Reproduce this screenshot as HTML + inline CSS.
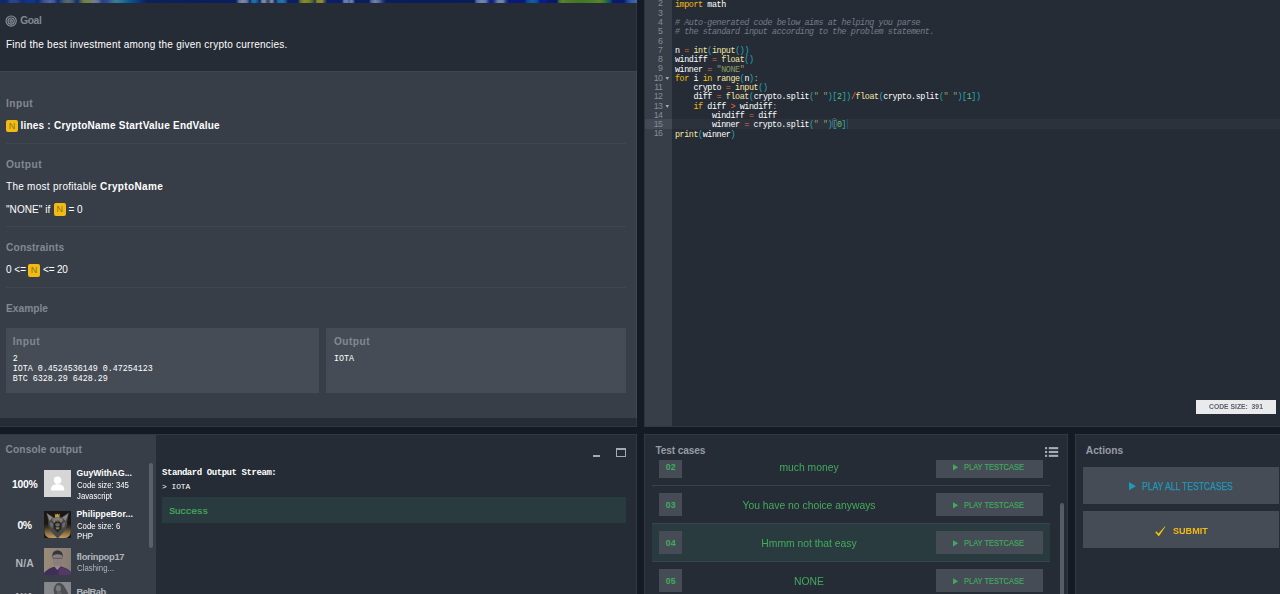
<!DOCTYPE html>
<html><head><meta charset="utf-8">
<style>
*{margin:0;padding:0;box-sizing:border-box}
html,body{width:1280px;height:594px;overflow:hidden;background:#151b24}
body{font-family:"Liberation Sans",sans-serif;font-size:10px;color:#fff;position:relative}
.abs{position:absolute}
.t{position:absolute;white-space:nowrap;line-height:12px}
.h{color:#838891;font-weight:bold;font-size:10.2px}
.b{font-weight:bold}
.n{background:#f2bb13;color:#8a7320;border-radius:2px;padding:1.4px 2.8px;font-size:9px;font-weight:normal;position:relative;top:0.2px}
.mono{font-family:"Liberation Mono",monospace}
#left{left:0;top:0;width:637.2px;height:427.3px;background:#383e48;overflow:hidden}
#strip{left:0;top:0;width:637px;height:3.2px;background:linear-gradient(90deg,#0b2874 0px,#0c2a78 7px,#2e418e 10px,#29418b 17px,#0d2c79 22px,#0d358e 27px,#0e3790 33px,#0c2876 38px,#3a5195 44px,#50659f 50px,#3f5697 54px,#0c2a79 58px,#485c6b 64px,#576b6c 68px,#495c6c 72px,#0c2876 77px,#687841 83px,#758440 86px,#737f52 90px,#737c9a 94px,#667097 98px,#253f86 102px,#324c93 108px,#337393 113px,#387d95 117px,#266f97 122px,#0e5c98 128px,#0e4486 135px,#0c2f73 141px,#0c2058 147px,#0b1e5c 214px,#0a1e62 236px,#66739a 239px,#7f89a7 243px,#66739a 247px,#0c286c 250px,#1b6ba7 252px,#1b72ae 255px,#13478e 258px,#0c2364 260px,#78829f 262px,#808aa4 265px,#3f4a6c 267px,#3f4a6c 269px,#808aa4 271px,#6b7597 273px,#0a205f 275px,#2068a1 278px,#2675a7 282px,#1c619a 285px,#0a1e64 288px,#0a1e64 298px,#596a2a 300px,#858f27 304px,#73842a 309px,#4c5c31 313px,#253045 315px,#858431 317px,#928f2a 322px,#3f4745 325px,#0a1e6c 327px,#0a1e6c 342px,#6675a7 344px,#7381ae 347px,#4c5b97 349px,#7381ae 351px,#5968a1 353px,#0a1d5c 355px,#0a1d5c 369px,#4c5c93 371px,#7382ae 375px,#596a9d 379px,#253473 383px,#0c1d5c 386px,#0b1b5a 474px,#596fa1 477px,#7386ae 482px,#5e75a7 486px,#172a8d 489px,#0a1b86 492px,#324490 495px,#7382a7 498px,#7382a7 503px,#25358d 506px,#0a1879 509px,#0a1879 524px,#0e4e9a 528px,#0f61a1 533px,#0e4a9d 537px,#0a1b8e 540px,#0a1b8a 546px,#0a166c 549px,#0a166c 557px,#3f6a31 559px,#59822a 562px,#4e7c24 568px,#407727 580px,#4c7d27 592px,#59842a 600px,#3f7733 604px,#176a4b 607px,#134e67 610px,#0a1873 613px,#0a1873 624px,#1b4197 627px,#325ba7 631px,#3f65ae 636px,#3f65ae 637px)}
#goal{left:0;top:3px;width:637.2px;height:68px;background:#262c36}
.sep{position:absolute;left:6px;width:620px;height:1px;background:#3f4650}
.box{position:absolute;background:#464c56}
#lbot{left:0;top:417.8px;width:637.2px;height:9.5px;background:#262c36}
#editor{left:644px;top:0;width:636px;height:427.3px;background:#262c36;border-bottom:1px solid #323842;overflow:hidden}
#gutter{left:0;top:0;width:28px;height:428px;background:#383e48}

.ln{position:absolute;left:0;width:18.55px;text-align:right;color:#848c97;font-size:8.8px;letter-spacing:-0.45px;line-height:9.2857px;height:9.2857px;margin-top:0.9px}
.cl{position:absolute;left:30.9px;white-space:pre;font-family:"Liberation Mono",monospace;font-size:8.4px;letter-spacing:-0.3971px;line-height:9.2857px;height:9.2857px;color:#fff;margin-top:2.0px}
.fold{position:absolute;left:21.8px;width:0;height:0;border-left:1.9px solid transparent;border-right:1.9px solid transparent;border-top:3.2px solid #a4acb8;margin-top:0.5px}
.k{color:#f2bb13}.f{color:#f6e7a2}.p{color:#1dabb8}.o{color:#f26a36}.s{color:#8a9a62}.m{color:#5cc36c}.c{color:#757d8b;font-style:italic}.col{color:#a8aeb8}
.br{outline:1px solid #6b7380;outline-offset:-0.5px}
.cur{display:inline-block;width:1px;height:8.6px;background:#8a929c;vertical-align:top;margin-top:0.3px}

#console{left:0;top:434.3px;width:637.2px;height:160px;background:#262c36;border:1px solid #323842;border-left:0;border-bottom:0;overflow:hidden}
#tests{left:644px;top:434.3px;width:424.2px;height:160px;background:#262c36;border:1px solid #323842;border-bottom:0;overflow:hidden}
#actions{left:1075px;top:434.3px;width:205px;height:160px;background:#262c36;border:1px solid #323842;border-bottom:0;border-right:0;overflow:hidden}
.av{left:44.1px;width:27.2px;height:27.2px;overflow:hidden}
.pc{font-size:10.4px}
.nm{left:76.5px;font-size:8.6px}
.sm{left:76.5px;font-size:8.6px;transform-origin:0 0;transform:scaleX(0.905)}
.tn{left:14.2px;width:22.9px;height:22.7px;background:#464c56;color:#41ab5d;font-weight:bold;font-size:8.8px}
.tname{left:14.0px;width:300px;text-align:center;color:#41ab5d;font-size:11px;line-height:14px;transform:scaleX(0.94)}
.tb{left:290.9px;width:106.9px;height:22.7px;background:#464c56;color:#41ab5d;white-space:nowrap}
.pt{font-size:9.7px;transform-origin:0 0;transform:scaleX(0.773);margin-top:0.4px;-webkit-text-stroke:0.2px #41ab5d}
</style></head><body>

<div id="left" class="abs">
  <div id="goal" class="abs"></div>
  <div id="strip" class="abs"></div>
  <svg class="abs" style="left:5px;top:15.4px" width="12" height="12" viewBox="0 0 12 12"><g fill="none" stroke="#8b9099" stroke-width="1.15"><circle cx="6.15" cy="6.05" r="5.1"/><circle cx="6.15" cy="6.05" r="3.1"/><circle cx="6.15" cy="6.05" r="1.25"/></g></svg>
  <div id="tGoal" class="t h" style="left:20.2px;top:15.1px;letter-spacing:-0.367px">Goal</div>
  <div id="tFind" class="t" style="left:6px;top:38.9px;letter-spacing:0.241px">Find the best investment among the given crypto currencies.</div>

  <div id="tIn" class="t h" style="left:6px;top:97.7px;letter-spacing:0.450px">Input</div>
  <div class="t" style="left:6px;top:119.9px"><span class="n">N</span></div>
  <div id="tLines" class="t b" style="left:20.4px;top:119.9px;letter-spacing:0.233px">lines : CryptoName StartValue EndValue</div>
  <div class="sep" style="top:143px"></div>
  <div id="tOut" class="t h" style="left:6px;top:158.5px;letter-spacing:0.440px">Output</div>
  <div id="tMost" class="t" style="left:6px;top:180.6px;letter-spacing:0.278px">The most profitable</div>
  <div id="tCN" class="t b" style="left:100.1px;top:180.6px;letter-spacing:0.356px">CryptoName</div>
  <div id="tNone" class="t" style="left:6px;top:203.5px;letter-spacing:0.075px">"NONE" if</div>
  <div class="t" style="left:53.6px;top:203.5px"><span class="n">N</span></div>
  <div id="tEq0" class="t" style="left:68.4px;top:203.5px">= 0</div>
  <div class="sep" style="top:226px"></div>
  <div id="tCons" class="t h" style="left:6px;top:242.1px;letter-spacing:0.150px">Constraints</div>
  <div id="tZero" class="t" style="left:6px;top:264.2px">0 &lt;=</div>
  <div class="t" style="left:27.9px;top:264.2px"><span class="n">N</span></div>
  <div id="t20" class="t" style="left:43px;top:264.2px;letter-spacing:-0.175px">&lt;= 20</div>
  <div class="sep" style="top:286.5px"></div>
  <div id="tEx" class="t h" style="left:6px;top:302.7px">Example</div>
  <div class="box" style="left:6px;top:328px;width:313px;height:65px"></div>
  <div class="box" style="left:326.4px;top:328px;width:299.2px;height:65px"></div>
  <div id="tIn2" class="t h" style="left:12.8px;top:335.7px;letter-spacing:0.475px">Input</div>
  <div id="tOut2" class="t h" style="left:334px;top:335.7px;letter-spacing:0.44px">Output</div>
  <div class="t mono" style="left:12.8px;top:354.3px;font-size:8.33px;line-height:10px">2<br>IOTA 0.4524536149 0.47254123<br>BTC 6328.29 6428.29</div>
  <div class="t mono" style="left:334px;top:354.3px;font-size:8.33px;line-height:10px">IOTA</div>
  <div id="lbot" class="abs"></div>
  <div class="abs" style="left:0;top:71px;width:636.2px;height:1px;background:rgba(255,255,255,0.035)"></div>
  <div class="abs" style="left:636.2px;top:3px;width:1px;height:424.3px;background:rgba(255,255,255,0.055)"></div>
  <div class="abs" style="left:0;top:426.3px;width:636.2px;height:1px;background:rgba(255,255,255,0.055)"></div>
</div>

<div id="editor" class="abs">
  <div class="abs" style="left:0;top:119.30px;width:636px;height:9.29px;background:#2c323c"></div>
  <div id="gutter" class="abs"></div>
  <div class="abs" style="left:0;top:119.30px;width:28px;height:9.29px;background:#444a54"></div>
  <div class="ln" style="top:-1.41px">2</div>
  <div class="cl" style="top:-1.41px"><span class="k">import</span> math</div>
  <div class="ln" style="top:7.87px">3</div>
  <div class="ln" style="top:17.16px">4</div>
  <div class="cl" style="top:17.16px"><span class="c"># Auto-generated code below aims at helping you parse</span></div>
  <div class="ln" style="top:26.44px">5</div>
  <div class="cl" style="top:26.44px"><span class="c"># the standard input according to the problem statement.</span></div>
  <div class="ln" style="top:35.73px">6</div>
  <div class="ln" style="top:45.01px">7</div>
  <div class="cl" style="top:45.01px">n <span class="o">=</span> <span class="f">int</span><span class="p">(</span><span class="f">input</span><span class="p">())</span></div>
  <div class="ln" style="top:54.30px">8</div>
  <div class="cl" style="top:54.30px">windiff <span class="o">=</span> <span class="f">float</span><span class="p">()</span></div>
  <div class="ln" style="top:63.59px">9</div>
  <div class="cl" style="top:63.59px">winner <span class="o">=</span> <span class="s">"NONE"</span></div>
  <div class="ln" style="top:72.87px">10</div>
  <svg class="abs" style="left:21.4px;top:76.17px" width="5" height="5" viewBox="0 0 5 5"><path d="M0.5 0.9 L4.1 0.9 L2.3 4.0 Z" fill="#a4acb8"/></svg>
  <div class="cl" style="top:72.87px"><span class="k">for</span> i <span class="k">in</span> <span class="f">range</span><span class="p">(</span>n<span class="p">)</span><span class="col">:</span></div>
  <div class="ln" style="top:82.16px">11</div>
  <div class="cl" style="top:82.16px">    crypto <span class="o">=</span> <span class="f">input</span><span class="p">()</span></div>
  <div class="ln" style="top:91.44px">12</div>
  <div class="cl" style="top:91.44px">    diff <span class="o">=</span> <span class="f">float</span><span class="p">(</span>crypto.split<span class="p">(</span><span class="s">" "</span><span class="p">)[</span><span class="m">2</span><span class="p">])</span><span class="o">/</span><span class="f">float</span><span class="p">(</span>crypto.split<span class="p">(</span><span class="s">" "</span><span class="p">)[</span><span class="m">1</span><span class="p">])</span></div>
  <div class="ln" style="top:100.73px">13</div>
  <svg class="abs" style="left:21.4px;top:104.03px" width="5" height="5" viewBox="0 0 5 5"><path d="M0.5 0.9 L4.1 0.9 L2.3 4.0 Z" fill="#a4acb8"/></svg>
  <div class="cl" style="top:100.73px">    <span class="k">if</span> diff <span class="o">&gt;</span> windiff<span class="col">:</span></div>
  <div class="ln" style="top:110.01px">14</div>
  <div class="cl" style="top:110.01px">        windiff <span class="o">=</span> diff</div>
  <div class="ln" style="top:119.30px">15</div>
  <div class="cl" style="top:119.30px">        winner <span class="o">=</span> crypto.split<span class="p">(</span><span class="s">" "</span><span class="p">)</span><span class="p">[</span><span class="m">0</span><span class="p">]</span></div>
  <div class="ln" style="top:128.59px">16</div>
  <div class="cl" style="top:128.59px"><span class="f">print</span><span class="p">(</span>winner<span class="p">)</span></div>
  <div class="abs" style="left:188.1px;top:117.9px;width:4.8px;height:10.3px;border:1px solid #4e545f;border-radius:2px"></div>
  <div class="abs" style="left:203.3px;top:119.4px;width:0.7px;height:9.2px;background:#3f4466"></div>
  <div class="abs" style="left:552.2px;top:399.5px;width:79.6px;height:14.5px;background:#e9eaec"></div>
  <div class="abs" style="left:0;top:0;width:1px;height:427.3px;background:#2e343e"></div>
  <div id="tCS" class="t b" style="left:565.4px;top:401.2px;font-size:7.8px;color:#5a606a;transform-origin:0 0;transform:scaleX(0.87)">CODE SIZE:&nbsp; 391</div>
</div>


<div id="console" class="abs">
  <div class="abs" style="left:0;top:0;width:156px;height:160px;background:#383e48"></div>
  <div id="cH" class="t h" style="left:5.5px;top:8.8px;letter-spacing:0.123px">Console output</div>
  <div class="abs" style="left:148.8px;top:27.7px;width:4px;height:85.5px;background:#5a616c;border-radius:2px"></div>

  <div id="cP1" class="t b pc" style="letter-spacing:-0.3px;left:12px;top:44.0px">100%</div>
  <div class="abs av" style="top:34.9px;background:#d6d6d6"><svg width="27.2" height="27.2" viewBox="0 0 27.2 27.2"><circle cx="13.6" cy="10.2" r="3.75" fill="#fff"/><path d="M6.9 20.4 C6.9 15.6 9.6 14.3 13.6 14.3 C17.6 14.3 20.3 15.6 20.3 20.4 Z" fill="#fff"/></svg></div>
  <div id="cN1" class="t b nm" style="top:32.1px">GuyWithAG...</div>
  <div id="cS1" class="t sm" style="top:43.5px">Code size: 345</div>
  <div id="cL1" class="t sm" style="top:54.6px">Javascript</div>

  <div id="cP2" class="t b pc" style="letter-spacing:-0.4px;left:17.4px;top:84.3px">0%</div>
  <div class="abs av" style="top:75.9px"><svg width="27.2" height="27.2" viewBox="0 0 27 27"><defs><linearGradient id="gw" x1="0" y1="0" x2="0" y2="1"><stop offset="0" stop-color="#1a1714"/><stop offset="0.25" stop-color="#3a2f22"/><stop offset="0.65" stop-color="#8a6f44"/><stop offset="1" stop-color="#c39e5e"/></linearGradient><filter id="bw" x="-10%" y="-10%" width="120%" height="120%"><feGaussianBlur stdDeviation="0.45"/></filter></defs><rect width="27" height="27" fill="#1a1714"/><g filter="url(#bw)"><path d="M0.4 12.5 L26.6 12.5 L26.6 20 Q26.6 26.9 19.5 26.9 L7.5 26.9 Q0.4 26.9 0.4 20 Z" fill="url(#gw)"/><path d="M2.4 1.7 L9.4 6.2 L13.5 5.2 L17.6 6.2 L24.8 1.5 L23.2 9 L22.9 14.1 L19.8 20.5 L13.5 27.2 L7.2 20.5 L4.3 14.1 L4.2 9 Z" fill="#4a4a4a"/><path d="M3.0 2.6 L8.8 6.5 L5.4 10 Z M24.2 2.4 L18.2 6.5 L21.6 10 Z" fill="#858585"/><path d="M8.2 7.4 L13.5 6.6 L18.8 7.4 L18.4 10.2 L13.5 9.4 L8.6 10.2 Z" fill="#7a7a7a"/><path d="M5.6 11 L9 12.4 L8.6 17 L6.6 15.4 Z M21.4 11 L18 12.4 L18.4 17 L20.4 15.4 Z" fill="#6c6c6c"/><path d="M9.6 11.6 L13.5 10.6 L17.4 11.6 L17.2 17.5 L13.5 21.5 L9.8 17.5 Z" fill="#262524"/><path d="M11 12.8 L13.5 12 L16 12.8 L15.2 15 L13.5 15.6 L11.8 15 Z" fill="#6a6a6a"/><path d="M11.6 16.1 L15.4 16.1 L15 18.2 L12 18.2 Z" fill="#8c7a48"/><path d="M9.3 10 L11 10.4 L10.8 11.3 L9.5 11 Z M17.7 10 L16 10.4 L16.2 11.3 L17.5 11 Z" fill="#c0a040"/><path d="M10.8 2.6 L11.9 3.8 L13.2 2.4 L14.5 3.8 L15.6 2.6 L15.4 6.5 L11 6.5 Z" fill="#bc9c3a"/></g></svg></div>
  <div id="cN2" class="t b nm" style="top:73.0px;letter-spacing:0.108px">PhilippeBor...</div>
  <div id="cS2" class="t sm" style="top:84.3px">Code size: 6</div>
  <div id="cL2" class="t sm" style="top:95.2px">PHP</div>

  <div id="cP3" class="t b pc" style="letter-spacing:0.2px;left:15.5px;top:122.5px;color:#b2b6bc">N/A</div>
  <div class="abs av" style="top:112.9px"><svg width="27.2" height="27.2" viewBox="0 0 27 27"><defs><filter id="bm" x="-10%" y="-10%" width="120%" height="120%"><feGaussianBlur stdDeviation="0.55"/></filter><linearGradient id="gm" x1="0" y1="0" x2="1" y2="0"><stop offset="0" stop-color="#9a8c7a"/><stop offset="1" stop-color="#877c72"/></linearGradient></defs><rect width="27" height="27" fill="url(#gm)"/><g filter="url(#bm)"><path d="M8.6 10.5 Q8 3 13.4 2.6 Q18.9 3 18.3 10.5 L17.8 14.5 Q17 19 13.4 19.4 Q9.8 19 9.1 14.5 Z" fill="#8a7d7d"/><path d="M8.2 11 Q7.2 2.4 13.4 2.2 Q19.6 2.4 18.7 11 L18 7.4 Q13.4 5.2 8.9 7.4 Z" fill="#36353f"/><path d="M8.8 9.8 L18 9.8 L18 10.5 L8.8 10.5 Z" fill="#4a4650"/><path d="M10.4 17.6 L16.6 17.6 L17 21 L10 21 Z" fill="#938a8c"/><path d="M-0.5 27.5 L0.4 24 Q3 21 8.4 19.2 L10.6 18.6 L13.2 22 L16.6 18.2 L19.2 19 Q24.6 20.6 26.6 23.6 L27.5 27.5 Z" fill="#3f2f58"/><path d="M14 27.5 L15 22 L17 19 L22 20.5 Q25.5 22 26.6 24.4 L27.5 27.5 Z" fill="#553964"/></g></svg></div>
  <div id="cN3" class="t b nm" style="top:115.8px;font-size:9.4px;color:#b2b6bc;letter-spacing:-0.300px">florinpop17</div>
  <div id="cS3" class="t sm" style="top:127.0px;color:#b2b6bc;letter-spacing:0.040px">Clashing...</div>

  <div id="cP4" class="t b pc" style="letter-spacing:0.2px;left:15.5px;top:156.9px;color:#b2b6bc">N/A</div>
  <div class="abs av" style="top:147.1px;height:12px"><svg width="27.2" height="12" viewBox="0 0 27 12"><defs><filter id="bg4" x="-10%" y="-10%" width="120%" height="120%"><feGaussianBlur stdDeviation="0.5"/></filter></defs><rect width="27" height="12" fill="#86878b"/><g filter="url(#bg4)"><path d="M10.6 13 Q8.6 7.5 10.4 4.4 Q11.8 1.2 14.6 0.8 Q17.6 0.6 19.6 3.4 Q22.4 7.4 24.8 13 Z" fill="#4c4d52"/><ellipse cx="14.3" cy="6.4" rx="2.6" ry="3.1" fill="#77787c"/><path d="M13 9.6 L17 9.6 L18 13 L12.6 13 Z" fill="#606166"/></g></svg></div>
  <div id="cN4" class="t b nm" style="top:150.8px;font-size:9.4px;color:#b2b6bc;letter-spacing:-0.520px">BelRab</div>

  <div class="abs" style="left:592.6px;top:19.6px;width:7.5px;height:2.3px;background:#a6a9ae"></div>
  <div class="abs" style="left:616.1px;top:12.5px;width:10px;height:9.4px;border:1.3px solid #a6a9ae;border-top-width:2.9px"></div>

  <div id="oT" class="t mono b" style="left:162px;top:31.3px;font-size:9px;letter-spacing:-0.43px">Standard Output Stream:</div>
  <div id="oI" class="t mono" style="left:162px;top:45.7px;font-size:7.86px">&gt; IOTA</div>
  <div class="abs" style="left:162.1px;top:62.2px;width:464.2px;height:25.5px;background:#2a3b3f"></div>
  <div id="oS" class="t mono" style="left:169.2px;top:70.8px;font-size:9.8px;letter-spacing:-0.38px;color:#49b161;-webkit-text-stroke:0.15px #49b161">Success</div>
</div>

<div id="tests" class="abs">
  <div id="hT" class="t h" style="color:#969ba4;letter-spacing:-0.15px;left:10.5px;top:9.6px">Test cases</div>
  <svg class="abs" style="left:399.9px;top:11.7px" width="14" height="11" viewBox="0 0 14 11"><g fill="#a9adb3"><rect x="0" y="0.1" width="2.1" height="2.1"/><rect x="3.8" y="0.1" width="9.4" height="2.1"/><rect x="0" y="3.95" width="2.1" height="2.1"/><rect x="3.8" y="3.95" width="9.4" height="2.1"/><rect x="0" y="7.8" width="2.1" height="2.1"/><rect x="3.8" y="7.8" width="9.4" height="2.1"/></g></svg>
  <div class="abs" style="left:415.2px;top:67.7px;width:3.9px;height:100px;background:#555c66;border-radius:2px"></div>
  <div class="abs" style="left:0;top:24.3px;width:415px;height:140px;overflow:hidden">
    <div class="abs" style="left:7.1px;top:25.7px;width:397.8px;height:1px;background:#3b424c"></div>
    <div class="abs tn" style="top:-4.2px"><span id="tn2n" class="t" style="left:0;width:22.9px;text-align:center;top:5.9px">02</span></div>
    <div id="tn2" class="t tname" style="top:0.9px">much money</div>
    <div class="abs tb" style="top:-4.2px"><svg width="6" height="8" viewBox="0 0 6 8" style="position:absolute;left:17.4px;top:8.8px"><path d="M0 0.2 L5.1 3.3 L0 6.4 Z" fill="#41ab5d"/></svg><span id="tn2b" class="t pt" style="left:27.7px;top:5.6px">PLAY TESTCASE</span></div>
    <div class="abs tn" style="top:33.7px"><span id="tn3n" class="t" style="left:0;width:22.9px;text-align:center;top:5.9px">03</span></div>
    <div id="tn3" class="t tname" style="top:38.8px">You have no choice anyways</div>
    <div class="abs tb" style="top:33.7px"><svg width="6" height="8" viewBox="0 0 6 8" style="position:absolute;left:17.4px;top:8.8px"><path d="M0 0.2 L5.1 3.3 L0 6.4 Z" fill="#41ab5d"/></svg><span id="tn3b" class="t pt" style="left:27.7px;top:5.6px">PLAY TESTCASE</span></div>
    <div class="abs" style="left:7.1px;top:63.7px;width:397.8px;height:39.2px;background:#2a3b3f;border-top:1px solid #36474b;border-bottom:1px solid #36474b"></div>
    <div class="abs tn" style="top:71.6px"><span id="tn4n" class="t" style="left:0;width:22.9px;text-align:center;top:5.9px">04</span></div>
    <div id="tn4" class="t tname" style="top:76.7px">Hmmm not that easy</div>
    <div class="abs tb" style="top:71.6px"><svg width="6" height="8" viewBox="0 0 6 8" style="position:absolute;left:17.4px;top:8.8px"><path d="M0 0.2 L5.1 3.3 L0 6.4 Z" fill="#41ab5d"/></svg><span id="tn4b" class="t pt" style="left:27.7px;top:5.6px">PLAY TESTCASE</span></div>
    <div class="abs tn" style="top:109.5px"><span id="tn5n" class="t" style="left:0;width:22.9px;text-align:center;top:5.9px">05</span></div>
    <div id="tn5" class="t tname" style="top:114.6px">NONE</div>
    <div class="abs tb" style="top:109.5px"><svg width="6" height="8" viewBox="0 0 6 8" style="position:absolute;left:17.4px;top:8.8px"><path d="M0 0.2 L5.1 3.3 L0 6.4 Z" fill="#41ab5d"/></svg><span id="tn5b" class="t pt" style="left:27.7px;top:5.6px">PLAY TESTCASE</span></div>
  </div>
</div>

<div id="actions" class="abs">
  <div id="hA" class="t h" style="color:#969ba4;left:9.8px;top:10.0px">Actions</div>
  <div class="abs" style="left:6.9px;top:31.4px;width:196.3px;height:37.2px;background:#464c56"></div>
  <div class="abs" style="left:6.9px;top:75.8px;width:196.3px;height:37px;background:#464c56"></div>
  <svg class="abs" style="left:53.2px;top:46.6px" width="8" height="9" viewBox="0 0 8 9"><path d="M0 0.1 L6.9 4.15 L0 8.2 Z" fill="#1e9ab8"/></svg>
  <div id="aP" class="t" style="left:65.6px;top:45.3px;color:#1e9ab8;font-size:10.2px;transform-origin:0 0;transform:scaleX(0.838);-webkit-text-stroke:0.25px #1e9ab8">PLAY ALL TESTCASES</div>
  <svg class="abs" style="left:78.6px;top:90.3px" width="11" height="10.4" viewBox="0 0 11 10.4"><path d="M0.3 6.3 L1.2 5.3 L3.5 7.4 L10.0 0.2 L10.5 0.5 L4.1 9.9 L3.4 9.9 Z" fill="#f5c400"/></svg>
  <div id="aS" class="t b" style="left:97.0px;top:89.5px;color:#f2bb13;font-size:9.8px;transform-origin:0 0;transform:scaleX(0.925)">SUBMIT</div>
</div>

</body></html>
